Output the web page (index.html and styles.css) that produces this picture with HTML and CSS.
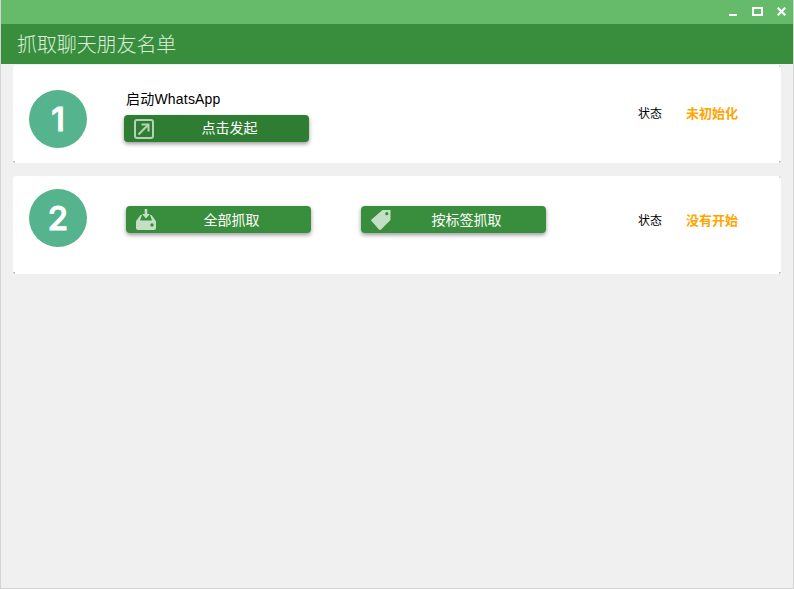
FILE: index.html
```html
<!DOCTYPE html>
<html lang="zh-CN">
<head>
<meta charset="utf-8">
<title>抓取聊天朋友名单</title>
<link rel="stylesheet" href="styles.css">
</head>
<body>
<div class="window">
  <div class="titlebar">
    <svg class="ctl ctl-min" width="8" height="2" viewBox="0 0 8 2"><rect width="8" height="2" fill="#fff"/></svg>
    <svg class="ctl ctl-max" width="11" height="9" viewBox="0 0 11 9"><path d="M0 0H11V9H0ZM2 2V7H9V2Z" fill="#fff" fill-rule="evenodd"/></svg>
    <svg class="ctl ctl-close" width="9" height="9" viewBox="0 0 9 9"><path d="M.7 .7L8.300 8.300M8.300 .7L.7 8.300" stroke="#fff" stroke-width="2.200"/></svg>
  </div>
  <header class="header">抓取聊天朋友名单</header>
  <main class="content">
    <section class="card card-first">
      <div class="step">1</div>
      <div class="body-first">
        <div class="label">启动WhatsApp</div>
        <button class="btn btn-dark">
          <svg class="icon" width="20" height="20" viewBox="0 0 20 20"><rect x="1" y="1" width="18" height="18" rx="2" fill="none" stroke="#b4d3b5" stroke-width="2"/><path d="M4.500 15.500L14.500 5.500M7.500 5.500H14.500V12.500" fill="none" stroke="#b4d3b5" stroke-width="2"/></svg>
          <span class="btn-text btn-text-first">点击发起</span>
        </button>
      </div>
      <div class="status"><span class="status-key">状态</span><span class="status-val">未初始化</span></div>
    </section>
    <section class="card card-second">
      <div class="step">2</div>
      <div class="body-second">
        <button class="btn">
          <svg class="icon" width="20" height="21" viewBox="0 0 20 21"><path d="M8.700 0H11.300V5H14L10 9.500L6 5H8.700Z" fill="#c3e0c5"/><path d="M4.500 6H6L4 11.500H16L14 6H15.500L19.500 11.500C20 12 20 12.500 20 13V19C20 20 19 21 18 21H2C1 21 0 20 0 19V13C0 12.500 0 12 .5 11.500Z" fill="#c3e0c5"/><circle cx="16" cy="16" r="1.700" fill="#388e3c"/></svg>
          <span class="btn-text">全部抓取</span>
        </button>
        <button class="btn btn-tag">
          <svg class="icon" width="20" height="20" viewBox="0 0 20 20"><path d="M11.500 1H19.500V11L10 20.500C9.500 21 8.500 21 8 20.500L.5 12C0 11.500 0 11 .5 10.500Z" transform="translate(0 -1)" fill="#c3e0c5"/><circle cx="15.800" cy="3.700" r="1.600" fill="#388e3c"/></svg>
          <span class="btn-text">按标签抓取</span>
        </button>
      </div>
      <div class="status"><span class="status-key">状态</span><span class="status-val">没有开始</span></div>
    </section>
  </main>
</div>
</body>
</html>
```
FILE: styles.css
```css
* { box-sizing: border-box; }
html, body { margin: 0; height: 100%; }
body { font-family: "Liberation Sans", "Noto Sans CJK SC", sans-serif; color: #000; }
.window {
  width: 794px; height: 589px; overflow: hidden;
  display: flex; flex-direction: column;
  background: #f0f0f0;
  border: 1px solid #d4d4d4; border-top: 0;
}
.titlebar {
  height: 24px; margin: 0 -1px; flex: none;
  background: #66bb6a;
  display: flex; justify-content: flex-end;
}
.ctl { flex: none; display: block; }
.ctl-min { margin-top: 14px; }
.ctl-max { margin: 7px 0 0 15px; }
.ctl-close { margin: 7px 8px 0 14px; }
.header {
  height: 40px; margin: 0 -1px; flex: none; padding-left: 17px;
  background: #388e3c; color: #dcefdc;
  font: 300 20px/40px "Noto Sans CJK SC", sans-serif;
  letter-spacing: -.1px;
}
.content { padding: 1px 12px 0; display: flex; flex-direction: column; gap: 13px; }
.card {
  height: 98px; display: flex; align-items: flex-start; padding-left: 16px;
  border-radius: 3px;
  background:
    linear-gradient(#bdbdbd, #bdbdbd) right bottom / 2px 2px no-repeat,
    linear-gradient(#d9d9d9, #d9d9d9) right top / 2px 2px no-repeat,
    linear-gradient(#bdbdbd, #bdbdbd) left bottom / 2px 2px no-repeat,
    #fff;
}
.card-first { padding-top: 25px; }
.card-second { padding-top: 13px; }
.step {
  width: 58px; height: 58px; flex: none; border-radius: 50%;
  background: #55b48e; color: #fff;
  font: 500 33px/58px Inter, sans-serif; text-align: center;
  -webkit-text-stroke: 1px #fff;
}
.body-first { margin-left: 37px; flex: none; }
.label { font-size: 14px; line-height: 20px; margin: -1px 0 6px 2px; letter-spacing: .2px; }
.btn {
  width: 185px; height: 27px; padding: 0 4px 0 10px; border: 0; border-radius: 4px;
  background: #388e3c; color: #fff;
  display: flex; align-items: center;
  box-shadow: 0 2px 4px rgba(0, 0, 0, .4);
  font: 14px "Noto Sans CJK SC", sans-serif;
}
.btn-dark { background: #2e7d32; }
.icon { flex: none; display: block; }
.btn-text { flex: 1; text-align: center; padding-bottom: 2px; }
.btn-text-first { padding-bottom: 4px; }
.body-second { margin: 17px 0 0 39px; display: flex; gap: 50px; flex: none; }
.status { margin-left: auto; width: 143px; flex: none; display: flex; gap: 24px; align-items: center; font-size: 12px; line-height: 16px; }
.card-first .status { margin-top: 16px; }
.card-second .status { margin-top: 24px; }
.status-val { color: #ffa500; font-weight: 700; font-size: 13px; }
```
